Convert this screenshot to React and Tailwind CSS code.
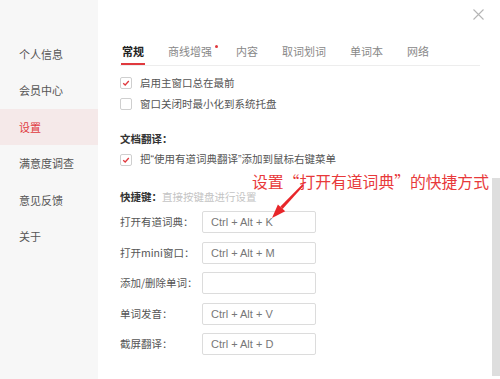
import React from "react";

const font = { fontFamily: '"Noto Sans CJK SC", "Noto Sans", sans-serif' };
const latin = { fontFamily: '"Liberation Sans", Arial, sans-serif' };

const menu = ["个人信息", "会员中心", "设置", "满意度调查", "意见反馈", "关于"];
const tabs = ["常规", "商线增强", "内容", "取词划词", "单词本", "网络"];
const keys = [
  ["打开有道词典：", "Ctrl + Alt + K"],
  ["打开mini窗口：", "Ctrl + Alt + M"],
  ["添加/删除单词：", ""],
  ["单词发音：", "Ctrl + Alt + V"],
  ["截屏翻译：", "Ctrl + Alt + D"],
];

function Check({ checked, children }) {
  return (
    <div className="flex items-center h-[21px]">
      <span className="w-[12px] h-[12px] border border-[#cfcfcf] rounded-[2px] bg-white flex items-center justify-center">
        {checked && (
          <svg width="8" height="8" viewBox="0 0 8 8">
            <path d="M1.2 4.2 L3.2 6 L6.8 2" fill="none" stroke="#e0393e" strokeWidth="1.3" />
          </svg>
        )}
      </span>
      <span className="ml-[8px] text-[10.5px] text-[#555]">{children}</span>
    </div>
  );
}

export default function App() {
  return (
    <div className="relative w-[500px] h-[379px] flex bg-white overflow-hidden" style={font}>
      {/* sidebar */}
      <div className="w-[98px] h-full bg-[#f7f7f7] pt-[36px]">
        {menu.map((m) => (
          <div
            key={m}
            className={
              "h-[36.4px] flex items-center pl-[19px] text-[11px] " +
              (m === "设置" ? "bg-[#f5e9e9] text-[#e0393e]" : "text-[#555]")
            }
          >
            {m}
          </div>
        ))}
      </div>

      {/* main */}
      <div className="flex-1 pl-[22px] pr-[20px]">
        <div className="mt-[38px] h-[28px] flex gap-[24px] border-b border-[#ededed] pl-[2px]">
          {tabs.map((t, i) => (
            <div
              key={t}
              className={
                "relative h-full flex items-center text-[11px] " +
                (i === 0 ? "font-bold text-[#222]" : "text-[#888]")
              }
            >
              {t}
              {i === 0 && <span className="absolute left-[-1px] right-[-1px] bottom-0 h-[2px] bg-[#e0393e]" />}
              {i === 1 && <span className="absolute right-[-6px] top-[7px] w-[3px] h-[3px] rounded-full bg-[#e0393e]" />}
            </div>
          ))}
        </div>

        <div className="mt-[6px]">
          <Check checked>启用主窗口总在最前</Check>
          <Check>窗口关闭时最小化到系统托盘</Check>
        </div>

        <div className="mt-[15px] h-[20px] flex items-center text-[10.5px] font-bold text-[#333]">文档翻译：</div>
        <Check checked>
          把<span style={latin}>“</span>使用有道词典翻译<span style={latin}>”</span>添加到鼠标右键菜单
        </Check>

        <div className="mt-[17px] h-[20px] flex items-center text-[10.5px]">
          <span className="font-bold text-[#333]">快捷键：</span>
          <span className="text-[#c4c4c4]">直接按键盘进行设置</span>
        </div>

        <div>
          {keys.map(([label, val]) => (
            <div key={label} className="h-[30.5px] flex items-center">
              <span className="w-[82px] text-[10.5px] text-[#555]">{label}</span>
              <div
                className="w-[114px] h-[22px] border border-[#dcdcdc] rounded-[2px] flex items-center pl-[8px] text-[11px] text-[#777]"
                style={latin}
              >
                {val}
              </div>
            </div>
          ))}
        </div>
      </div>

      {/* close */}
      <svg className="absolute left-[473px] top-[9px]" width="11" height="11" viewBox="0 0 11 11">
        <path d="M0.5 0.5 L10.5 10.5 M10.5 0.5 L0.5 10.5" stroke="#b5b5b5" strokeWidth="1.1" />
      </svg>

      {/* scrollbar */}
      <div className="absolute left-[492px] top-[178px] w-[8px] h-[198px] bg-[#dedede]" />

      {/* annotation */}
      <div className="absolute left-[252px] top-[171px] text-[15.8px] leading-[22px] text-[#e8393a] whitespace-nowrap">
        设置“打开有道词典”的快捷方式
      </div>
      <svg className="absolute left-0 top-0 pointer-events-none" width="500" height="379">
        <polygon points="303.6,185.7 302.4,184.3 280.4,206.6 282.6,208.9" fill="#e8262a" />
        <polygon points="272,218 277.9,204.4 285.2,211.2" fill="#e8262a" />
      </svg>
    </div>
  );
}
